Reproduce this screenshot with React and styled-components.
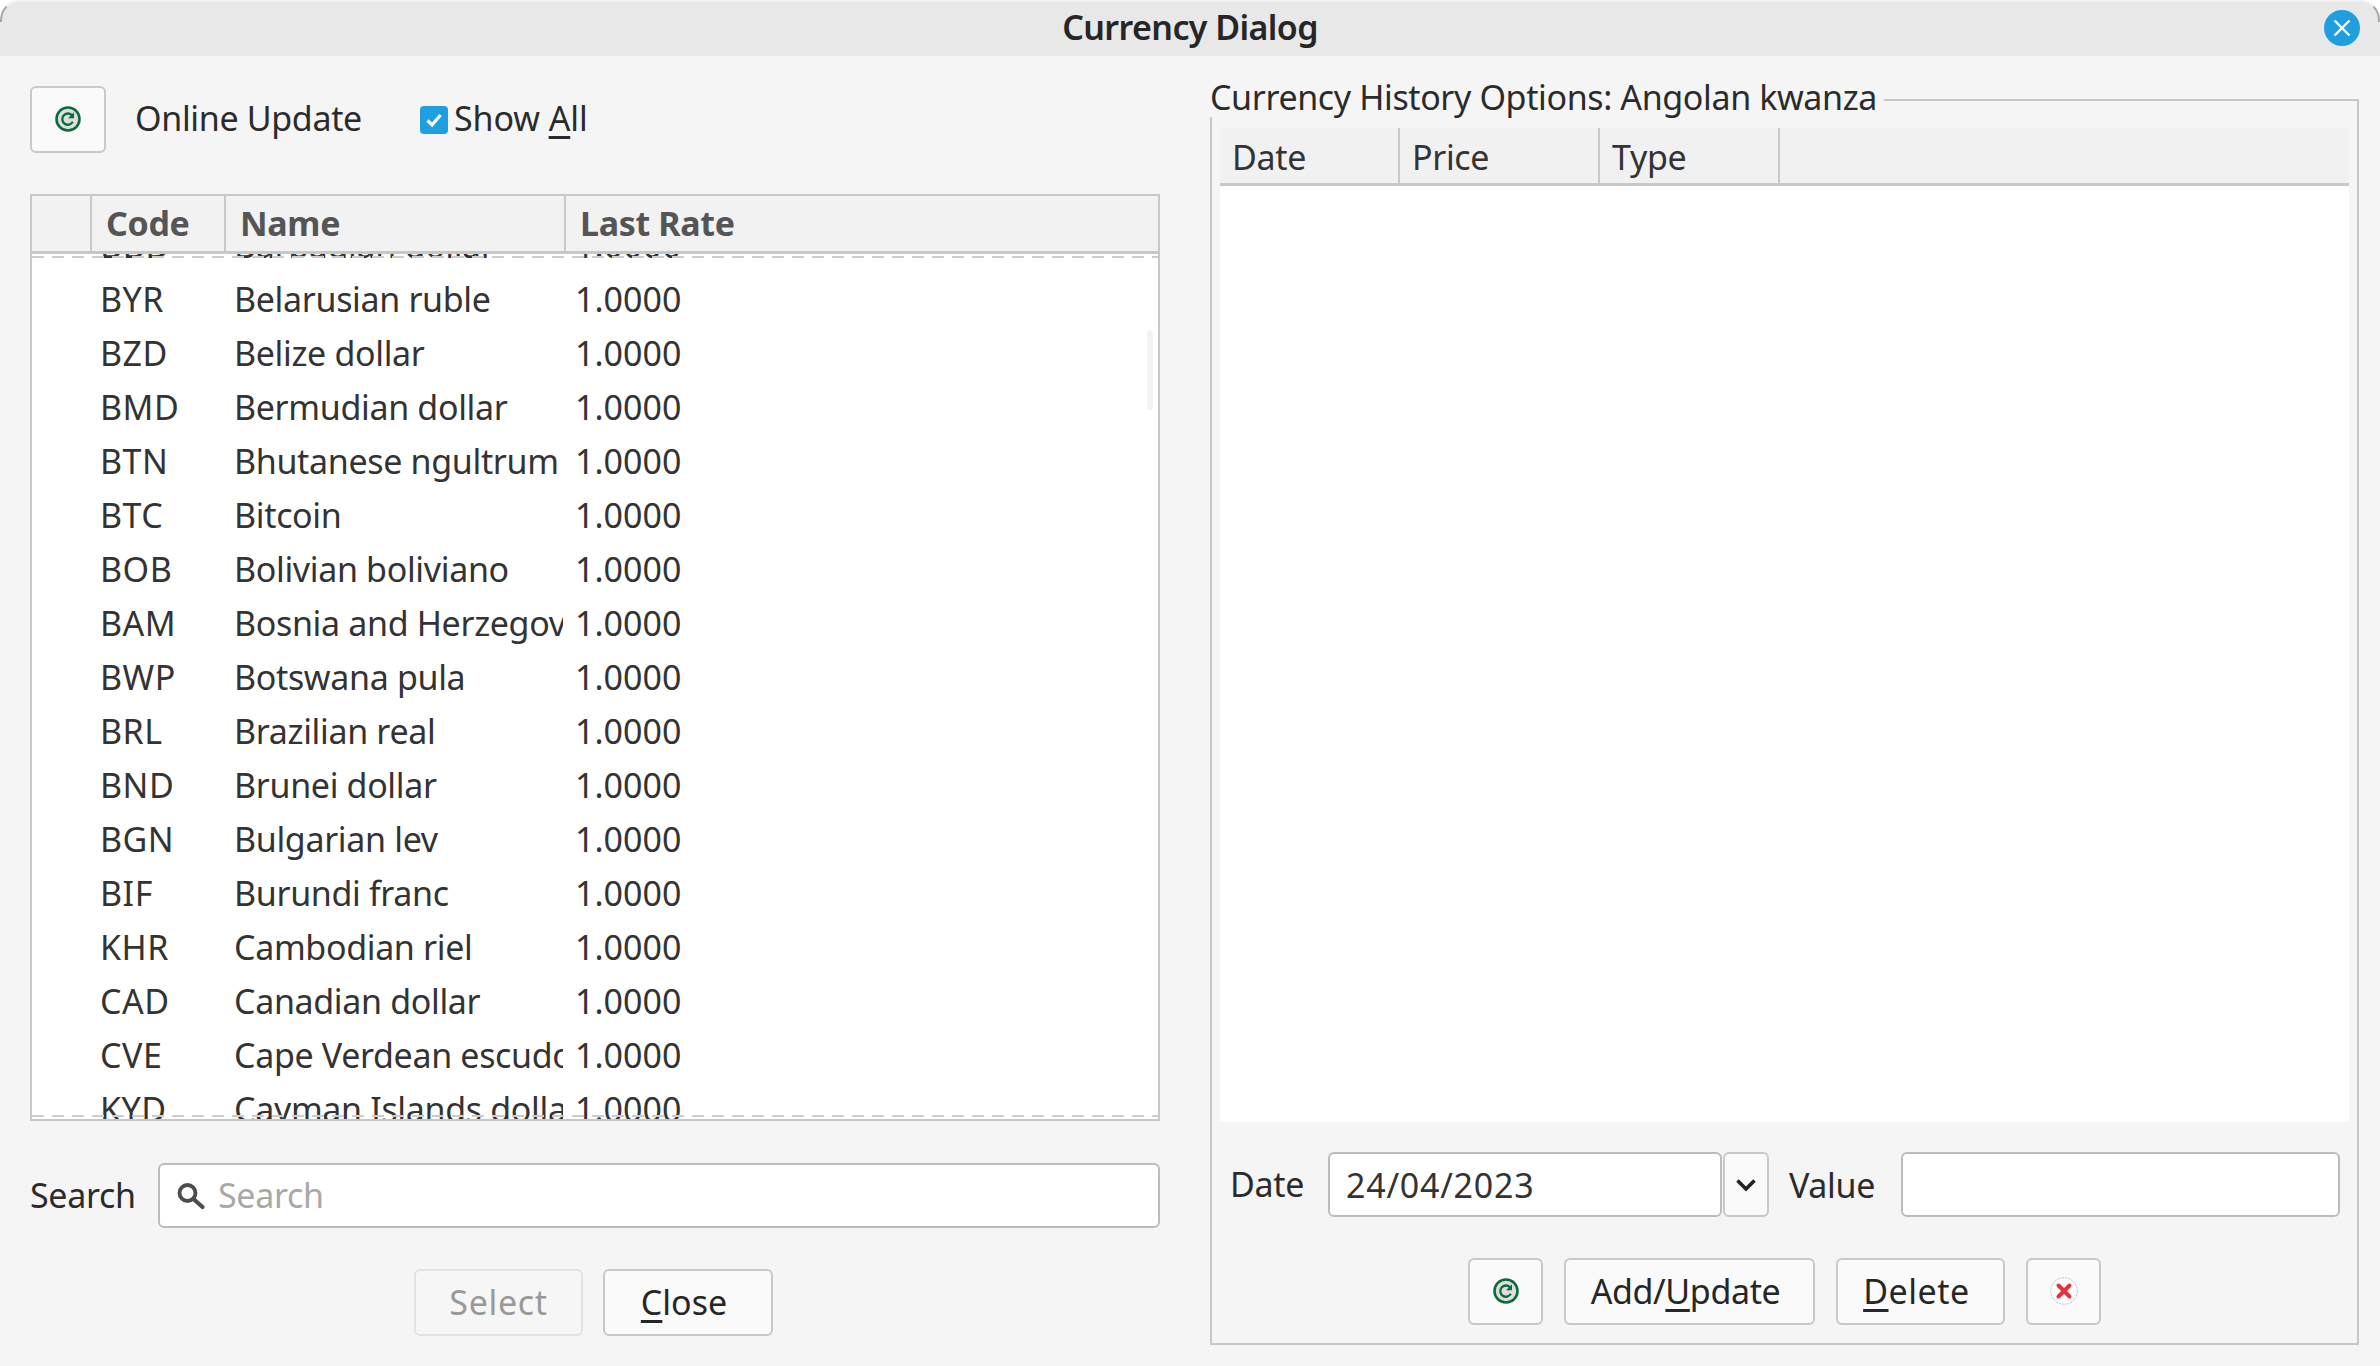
import styled, { createGlobalStyle } from "styled-components";

const currencies = [
  ["BBD", "Barbadian dollar"],
  ["BYR", "Belarusian ruble"],
  ["BZD", "Belize dollar"],
  ["BMD", "Bermudian dollar"],
  ["BTN", "Bhutanese ngultrum"],
  ["BTC", "Bitcoin"],
  ["BOB", "Bolivian boliviano"],
  ["BAM", "Bosnia and Herzegovina mark"],
  ["BWP", "Botswana pula"],
  ["BRL", "Brazilian real"],
  ["BND", "Brunei dollar"],
  ["BGN", "Bulgarian lev"],
  ["BIF", "Burundi franc"],
  ["KHR", "Cambodian riel"],
  ["CAD", "Canadian dollar"],
  ["CVE", "Cape Verdean escudo"],
  ["KYD", "Cayman Islands dollar"],
];

const RefreshIcon = () => (
  <svg width="28" height="28" viewBox="0 0 28 28">
    <circle cx="14" cy="14" r="11.5" fill="#dedede" stroke="#0b6b3c" strokeWidth="2.6" />
    <path d="M18.8 16.8a5.6 5.6 0 1 1-.9-6.6" fill="none" stroke="#0b6b3c" strokeWidth="2.3" />
    <path d="M20 7.2v6h-6z" fill="#0b6b3c" />
  </svg>
);

const CancelIcon = () => (
  <svg width="30" height="30" viewBox="0 0 30 30">
    <circle cx="15" cy="15" r="13.2" fill="#fff" stroke="#bdbdbd" strokeWidth="1" strokeDasharray="2 1" />
    <path d="M9.5 9.5l11 11M20.5 9.5l-11 11" stroke="#e8303a" strokeWidth="4" strokeLinecap="round" />
  </svg>
);

const SearchIcon = () => (
  <svg width="30" height="30" viewBox="0 0 30 30">
    <circle cx="11.5" cy="13" r="8" fill="none" stroke="#4d4d4d" strokeWidth="3.8" />
    <path d="M17.5 19l9 8" stroke="#4d4d4d" strokeWidth="4.2" strokeLinecap="round" />
  </svg>
);

const App = () => {
  return (
    <Window>
      <GlobalStyle />
      <TitleBar>
        <Title>Currency Dialog</Title>
        <CloseDot aria-label="Close">
          <svg width="20" height="20" viewBox="0 0 20 20">
            <path d="M2.5 2.5l15 15M17.5 2.5l-15 15" stroke="#fff" strokeWidth="2.4" />
          </svg>
        </CloseDot>
      </TitleBar>
      <Content>
        <LeftPanel>
          <TopRow>
            <Button $width="76px">
              <RefreshIcon />
            </Button>
            <OnlineLabel>Online Update</OnlineLabel>
            <CheckLabel>
              <CheckBox>
                <svg width="18" height="16" viewBox="0 0 18 16">
                  <path d="M2.5 8.5l4.5 4.5 8.5-10" fill="none" stroke="#fff" strokeWidth="3.2" />
                </svg>
              </CheckBox>
              <CheckText>
                Show <u>A</u>ll
              </CheckText>
            </CheckLabel>
          </TopRow>
          <CurrencyTable>
            <TableHead>
              <HeadCell />
              <HeadCell>Code</HeadCell>
              <HeadCell>Name</HeadCell>
              <HeadCell $last>Last Rate</HeadCell>
            </TableHead>
            <TableBody>
              <ScrollList>
                {currencies.map(([code, name]) => (
                  <Row key={code}>
                    <span />
                    <CodeCell>{code}</CodeCell>
                    <NameCell>{name}</NameCell>
                    <RateCell>1.0000</RateCell>
                  </Row>
                ))}
              </ScrollList>
              <ScrollThumb />
            </TableBody>
          </CurrencyTable>
          <SearchRow>
            <FieldLabel>Search</FieldLabel>
            <SearchBox>
              <SearchIcon />
              <SearchInput placeholder="Search" />
            </SearchBox>
          </SearchRow>
          <ButtonRow>
            <Button $width="169px" $spacing="0.65px" disabled>
              Select
            </Button>
            <Button $width="170px" $spacing="0" $mnemonic>
              <u>C</u>lose
            </Button>
          </ButtonRow>
        </LeftPanel>
        <GroupBox>
          <Legend>Currency History Options: Angolan kwanza</Legend>
          <HistoryTable>
            <HistoryHead>
              <HistoryCell>Date</HistoryCell>
              <HistoryCell>Price</HistoryCell>
              <HistoryCell>Type</HistoryCell>
            </HistoryHead>
            <HistoryBody />
          </HistoryTable>
          <DateRow>
            <FieldLabel>Date</FieldLabel>
            <DateInput defaultValue="24/04/2023" />
            <DropButton>
              <svg width="22" height="14" viewBox="0 0 22 14">
                <path d="M2.5 2.5l8.5 8.5 8.5-8.5" fill="none" stroke="#222" strokeWidth="3.6" />
              </svg>
            </DropButton>
            <ValueLabel>Value</ValueLabel>
            <ValueInput />
          </DateRow>
          <ActionRow>
            <Button $width="75px">
              <RefreshIcon />
            </Button>
            <Button $width="251px" $spacing="-0.37px" $mnemonic>
              Add/<u>U</u>pdate
            </Button>
            <Button $width="169px" $spacing="0.55px" $mnemonic>
              <u>D</u>elete
            </Button>
            <Button $width="75px">
              <CancelIcon />
            </Button>
          </ActionRow>
        </GroupBox>
      </Content>
    </Window>
  );
};

export default App;

const GlobalStyle = createGlobalStyle`
  * {
    box-sizing: border-box;
  }
  html, body {
    margin: 0;
    background: #ffffff;
  }
  body {
    font-family: "Noto Sans", "Open Sans", sans-serif;
    font-size: 34px;
    letter-spacing: -0.34px;
    color: #2b2b2b;
  }
  u {
    text-underline-offset: 5px;
    text-decoration-thickness: 3px;
  }
`;

const Window = styled.div`
  position: relative;
  width: 2380px;
  height: 1366px;
  background: #f5f5f5;
  border-radius: 20px 20px 0 0;
  overflow: hidden;
  display: flex;
  flex-direction: column;
  &::before {
    content: "";
    position: absolute;
    top: 0;
    left: 0;
    right: 0;
    height: 20px;
    border: 2px solid transparent;
    border-top-color: #f0f0f0;
    border-left-color: #a6a6a6;
    border-right-color: #a6a6a6;
    border-bottom: none;
    border-radius: 20px 20px 0 0;
    pointer-events: none;
    z-index: 1;
  }
`;

const TitleBar = styled.div`
  position: relative;
  height: 56px;
  flex: none;
  display: flex;
  align-items: center;
  justify-content: center;
  padding-bottom: 2px;
  background: #e8e8e8;
`;

const Title = styled.div`
  font-weight: 600;
  letter-spacing: -0.6px;
  color: #262626;
`;

const CloseDot = styled.div`
  position: absolute;
  right: 20px;
  top: 10px;
  width: 36px;
  height: 36px;
  border-radius: 50%;
  background: #1f9ee0;
  display: flex;
  align-items: center;
  justify-content: center;
`;

const Content = styled.div`
  flex: 1;
  display: flex;
  padding: 0 21px 0 30px;
  gap: 50px;
`;

const LeftPanel = styled.div`
  width: 1130px;
  flex: none;
  padding-top: 30px;
  display: flex;
  flex-direction: column;
`;

const TopRow = styled.div`
  display: flex;
  align-items: center;
  height: 67px;
`;

const Button = styled.button`
  width: ${({ $width }) => $width};
  height: 67px;
  padding: 0 ${({ $mnemonic }) => ($mnemonic ? "8px" : "0")} 2px 0;
  display: flex;
  align-items: center;
  justify-content: center;
  font: inherit;
  letter-spacing: ${({ $spacing }) => $spacing || "-0.34px"};
  color: ${({ disabled }) => (disabled ? "#999999" : "#262626")};
  background: ${({ disabled }) => (disabled ? "#f6f6f6" : "#fafafa")};
  border: 2px solid ${({ disabled }) => (disabled ? "#e2e2e2" : "#c8c8c8")};
  border-radius: 6px;
`;

const OnlineLabel = styled.span`
  margin-left: 29px;
  margin-bottom: 3px;
  width: 285px;
`;

const CheckLabel = styled.label`
  display: flex;
  align-items: center;
  gap: 6px;
`;

const CheckText = styled.span`
  margin-bottom: 3px;
  letter-spacing: -0.1px;
`;

const CheckBox = styled.span`
  width: 28px;
  height: 28px;
  border-radius: 4px;
  background: #1f9ee0;
  display: flex;
  align-items: center;
  justify-content: center;
`;

const CurrencyTable = styled.div`
  margin-top: 41px;
  height: 927px;
  border: 2px solid #c8c8c8;
  display: flex;
  flex-direction: column;
  background: #fff;
`;

const TableHead = styled.div`
  flex: none;
  height: 58px;
  display: grid;
  grid-template-columns: 60px 134px 340px 1fr;
  background: #f2f2f2;
  border-bottom: 3px solid #c8c8c8;
`;

const HeadCell = styled.div`
  display: flex;
  align-items: center;
  padding: 0 0 1px 14px;
  font-weight: 700;
  color: #555555;
  border-right: ${({ $last }) => ($last ? "none" : "2px solid #c8c8c8")};
`;

const TableBody = styled.div`
  position: relative;
  flex: 1;
  overflow: hidden;
  &::before,
  &::after {
    content: "";
    position: absolute;
    left: 0;
    right: 0;
    height: 2px;
    background: repeating-linear-gradient(90deg, #cccccc 0 12px, transparent 12px 20px);
  }
  &::before {
    top: 2px;
  }
  &::after {
    bottom: 2px;
  }
`;

const ScrollList = styled.div`
  margin-top: -36px;
`;

const Row = styled.div`
  height: 54px;
  display: grid;
  grid-template-columns: 60px 134px 340px 1fr;
  align-items: center;
  color: #333333;
`;

const CodeCell = styled.span`
  padding-left: 8px;
  letter-spacing: 0.5px;
`;

const NameCell = styled.span`
  margin-right: 3px;
  padding-left: 8px;
  overflow: hidden;
  white-space: nowrap;
`;

const RateCell = styled.span`
  padding-left: 9px;
  letter-spacing: 0;
`;

const ScrollThumb = styled.div`
  position: absolute;
  top: 76px;
  right: 5px;
  width: 6px;
  height: 80px;
  border-radius: 3px;
  background: #f3f3f3;
`;

const SearchRow = styled.div`
  margin-top: 42px;
  display: flex;
  align-items: center;
  justify-content: space-between;
`;

const FieldLabel = styled.span`
  margin-bottom: 1px;
`;

const SearchBox = styled.div`
  width: 1002px;
  height: 65px;
  display: flex;
  align-items: center;
  gap: 12px;
  padding: 0 0 1px 16px;
  background: #fff;
  border: 2px solid #bcbcbc;
  border-radius: 6px;
`;

const SearchInput = styled.input`
  flex: 1;
  min-width: 0;
  border: none;
  outline: none;
  padding: 0;
  font: inherit;
  letter-spacing: inherit;
  background: transparent;
  &::placeholder {
    color: #a8a8a8;
    opacity: 1;
  }
`;

const ButtonRow = styled.div`
  margin-top: 41px;
  display: flex;
  justify-content: center;
  gap: 20px;
  padding-right: 3px;
`;

const GroupBox = styled.div`
  position: relative;
  width: 1149px;
  height: 1246px;
  margin-top: 43px;
  padding: 27px 8px 0 8px;
  border: 2px solid #c8c8c8;
  display: flex;
  flex-direction: column;
`;

const Legend = styled.div`
  position: absolute;
  left: -2px;
  top: -22px;
  height: 38px;
  line-height: 36px;
  padding-right: 7px;
  letter-spacing: -0.38px;
  background: #f5f5f5;
`;

const HistoryTable = styled.div`
  height: 994px;
  display: flex;
  flex-direction: column;
`;

const HistoryHead = styled.div`
  flex: none;
  height: 58px;
  display: grid;
  grid-template-columns: 180px 200px 180px;
  background: #f1f1f1;
  border-bottom: 3px solid #c8c8c8;
`;

const HistoryCell = styled.div`
  display: flex;
  align-items: center;
  padding-left: 12px;
  padding-top: 2px;
  color: #333333;
  border-right: 2px solid #c8c8c8;
`;

const HistoryBody = styled.div`
  flex: 1;
  background: #fff;
`;

const DateRow = styled.div`
  margin-top: 30px;
  display: flex;
  align-items: center;
  padding-left: 10px;
`;

const DateInput = styled.input`
  width: 394px;
  height: 65px;
  margin-left: 24px;
  padding: 0 16px;
  font: inherit;
  letter-spacing: 0.75px;
  color: #333333;
  background: #fff;
  border: 2px solid #bcbcbc;
  border-radius: 6px;
  outline: none;
`;

const DropButton = styled.div`
  width: 46px;
  height: 65px;
  margin-left: 1px;
  display: flex;
  align-items: center;
  justify-content: center;
  background: #fafafa;
  border: 2px solid #c8c8c8;
  border-radius: 6px;
`;

const ValueLabel = styled.span`
  margin-left: 20px;
  width: 112px;
`;

const ValueInput = styled.input`
  width: 439px;
  height: 65px;
  background: #fff;
  border: 2px solid #bcbcbc;
  border-radius: 6px;
  outline: none;
`;

const ActionRow = styled.div`
  margin-top: 41px;
  display: flex;
  justify-content: center;
  gap: 21px;
`;
